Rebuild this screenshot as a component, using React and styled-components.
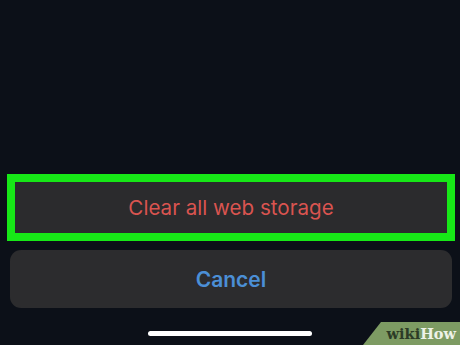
import React from "react";
import styled, { createGlobalStyle } from "styled-components";

const Global = createGlobalStyle`
  html, body { margin: 0; padding: 0; background: #0c1018; }
  #root { width: 460px; height: 345px; }
`;

const Screen = styled.div`
  position: relative;
  width: 460px;
  height: 345px;
  background: #0c1018;
  display: flex;
  flex-direction: column;
  justify-content: flex-end;
  overflow: hidden;
  font-family: Inter, "Liberation Sans", sans-serif;
`;

const Highlight = styled.div`
  margin: 0 5px 0 7px;
  border: 8px solid #17e817;
  height: 51px;
  background: #2b2b2d;
  display: flex;
  align-items: center;
  justify-content: center;
`;

const SheetButton = styled.div`
  margin: ${(p) => p.$mt || 0}px 8px 0 10px;
  height: 58px;
  border-radius: 11px;
  background: #2c2c2e;
  display: flex;
  align-items: center;
  justify-content: center;
`;

const Label = styled.span`
  font-size: ${(p) => p.$size || 21}px;
  color: ${(p) => p.$color};
  font-weight: ${(p) => p.$weight || 400};
  letter-spacing: 0;
`;

const HomeRow = styled.div`
  height: 37px;
  display: flex;
  justify-content: center;
  padding-top: 23px;
  box-sizing: border-box;
`;

const HomeBar = styled.div`
  width: 164px;
  height: 5px;
  border-radius: 3px;
  background: #ffffff;
`;

const Badge = styled.div`
  position: absolute;
  right: 0;
  bottom: 0;
  width: 97px;
  height: 23px;
  background: #7d9b63;
  clip-path: polygon(18px 0, 100% 0, 100% 100%, 0 100%);
  display: flex;
  align-items: center;
  justify-content: flex-end;
  padding-right: 4px;
  box-sizing: border-box;
  font-family: "DejaVu Serif", "Liberation Serif", serif;
  font-weight: 700;
  font-size: 14.5px;
`;

const Wiki = styled.span`
  color: #2c3b26;
`;
const How = styled.span`
  color: #eef2e8;
`;

export default function App() {
  return (
    <>
      <Global />
      <Screen>
        <Highlight>
          <Label $color="#da5450" $size={20.6}>Clear all web storage</Label>
        </Highlight>
        <SheetButton $mt={9}>
          <Label $color="#4b8fd6" $weight={600}>Cancel</Label>
        </SheetButton>
        <HomeRow>
          <HomeBar />
        </HomeRow>
        <Badge>
          <Wiki>wiki</Wiki>
          <How>How</How>
        </Badge>
      </Screen>
    </>
  );
}
